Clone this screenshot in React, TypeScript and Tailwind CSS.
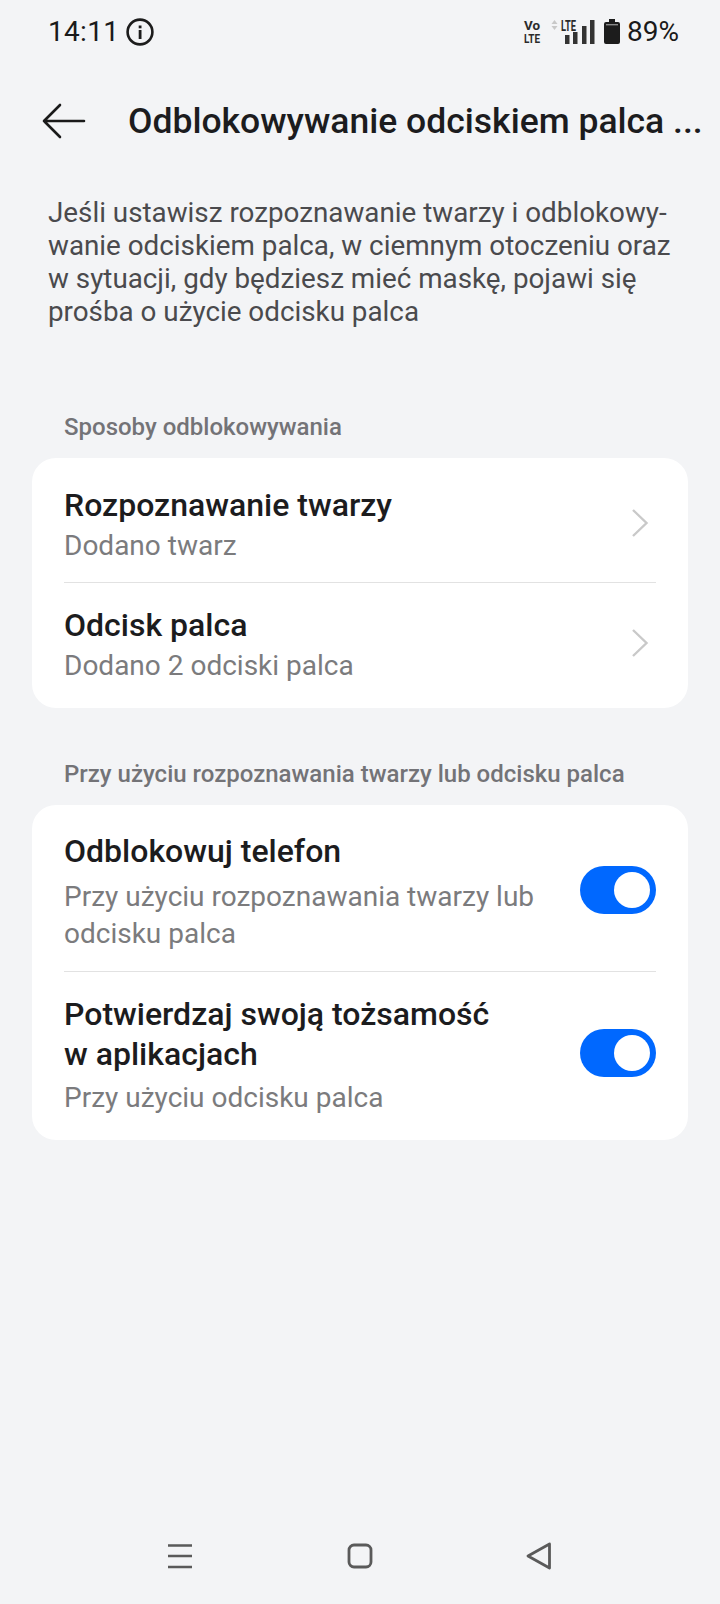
import React from 'react';

const Chevron = () => (
  <svg width="18" height="30" viewBox="0 0 18 30" fill="none" className="shrink-0">
    <path d="M2 2 L15.5 15 L2 28" stroke="#c9c9c9" strokeWidth="2.4" />
  </svg>
);

const Toggle = () => (
  <div className="flex h-[48px] w-[76px] shrink-0 items-center justify-end rounded-full bg-[#0068ff] pr-[6px]">
    <div className="h-[36px] w-[36px] rounded-full bg-white" />
  </div>
);

const StatusBar = () => (
  <div className="flex h-[64px] items-center justify-between pl-[48px] pr-[41px]">
    <div className="flex items-center gap-[7px]">
      <span className="text-[28px] text-[#1a1a1a] tracking-[0.3px]">14:11</span>
      <svg width="28" height="28" viewBox="0 0 28 28" fill="none">
        <circle cx="14" cy="14" r="12.4" stroke="#1c1c1c" strokeWidth="2.6" />
        <rect x="12.7" y="12" width="2.8" height="9" fill="#1c1c1c" />
        <rect x="12.7" y="7.5" width="2.8" height="2.8" fill="#1c1c1c" />
      </svg>
    </div>
    <div className="flex items-center">
      <svg width="17" height="25" viewBox="0 0 17 25" className="mr-[10px] overflow-visible">
        <text x="0" y="10" fontSize="12.5" fontWeight="700" fill="#2a2a2a" textLength="16" lengthAdjust="spacingAndGlyphs">Vo</text>
        <text x="0" y="23" fontSize="12.5" fontWeight="700" fill="#2a2a2a" textLength="16" lengthAdjust="spacingAndGlyphs">LTE</text>
      </svg>
      <svg width="45" height="26" viewBox="0 0 45 26" className="mr-[8px] overflow-visible">
        <path d="M0.5 5 L3.5 1 L6.5 5 Z M0.5 7 L6.5 7 L3.5 11 Z" fill="#c8c8c8" />
        <text x="10" y="12" fontSize="14" fontWeight="700" fill="#2a2a2a" textLength="15" lengthAdjust="spacingAndGlyphs">LTE</text>
        <rect x="14" y="16" width="4.5" height="9" fill="#333" />
        <rect x="22" y="13" width="4.5" height="12" fill="#333" />
        <rect x="31" y="7" width="4.5" height="18" fill="#333" />
        <rect x="39" y="1" width="4.5" height="24" fill="#333" />
      </svg>
      <svg width="16" height="26" viewBox="0 0 16 26" className="mr-[7px]">
        <path d="M5 0 H11 V3 H14 Q16 3 16 5 V23 Q16 25 14 25 H2 Q0 25 0 23 V5 Q0 3 2 3 H5 Z" fill="#1c1c1c" />
        <rect x="2" y="5" width="12" height="1.4" fill="#8a8a8a" />
      </svg>
      <span className="text-[28px] text-[#1a1a1a]">89%</span>
    </div>
  </div>
);

const Title = ({ children }: { children: React.ReactNode }) => (
  <div className="text-[32px] font-medium leading-[40px] text-[#1c1c1e]">{children}</div>
);

const Sub = ({ children }: { children: React.ReactNode }) => (
  <div className="mt-[2px] text-[28px] leading-[38px] text-[#7b7b7d]">{children}</div>
);

export default function App() {
  return (
    <div className="flex h-[1604px] w-[720px] flex-col overflow-hidden bg-[#f3f4f6] font-['Roboto',sans-serif]">
      <StatusBar />

      {/* Title bar */}
      <div className="mt-[33px] flex h-[50px] items-center">
        <svg width="44" height="36" viewBox="0 0 44 36" fill="none" className="ml-[42px] -translate-y-px shrink-0">
          <path d="M18 2 L2 18 L18 34 M2 18 H42" stroke="#1a1a1a" strokeWidth="2.6" strokeLinecap="round" strokeLinejoin="round" />
        </svg>
        <span className="ml-[42px] whitespace-nowrap text-[35.5px] font-medium text-[#1c1c1e]">
          Odblokowywanie odciskiem palca ...
        </span>
      </div>

      {/* Description */}
      <p className="ml-[48px] mt-[49px] w-[660px] text-[27.8px] leading-[33px] text-[#4a4a4d]">
        Jeśli ustawisz rozpoznawanie twarzy i odblokowy-
        <br />
        wanie odciskiem palca, w ciemnym otoczeniu oraz
        <br />
        w sytuacji, gdy będziesz mieć maskę, pojawi się
        <br />
        prośba o użycie odcisku palca
      </p>

      <div className="ml-[64px] mt-[84px] text-[24px] font-medium leading-[30px] text-[#737377]">Sposoby odblokowywania</div>

      <div className="mx-[32px] mt-[16px] flex h-[250px] w-[656px] flex-col rounded-[24px] bg-white px-[32px]">
        <div className="flex h-[125px] items-center justify-between border-b border-[#e2e2e2] pt-[5px] pr-[7px]">
          <div className="pt-[4px]">
            <Title>Rozpoznawanie twarzy</Title>
            <Sub>Dodano twarz</Sub>
          </div>
          <Chevron />
        </div>
        <div className="flex flex-1 items-center justify-between pb-[5px] pr-[7px]">
          <div className="pt-[4px]">
            <Title>Odcisk palca</Title>
            <Sub>Dodano 2 odciski palca</Sub>
          </div>
          <Chevron />
        </div>
      </div>

      <div className="ml-[64px] mt-[51px] text-[24px] font-medium leading-[30px] text-[#737377]">
        Przy użyciu rozpoznawania twarzy lub odcisku palca
      </div>

      <div className="mx-[32px] mt-[16px] flex w-[656px] flex-col rounded-[24px] bg-white px-[32px]">
        <div className="flex h-[167px] items-center justify-between border-b border-[#e2e2e2] pt-[3px]">
          <div className="w-[480px] pt-[4px]">
            <Title>Odblokowuj telefon</Title>
            <div className="mt-[7px] text-[28px] leading-[37px] text-[#7b7b7d]">
              Przy użyciu rozpoznawania twarzy lub odcisku palca
            </div>
          </div>
          <Toggle />
        </div>
        <div className="flex h-[168px] items-center justify-between pb-[6px]">
          <div className="pt-[4px]">
            <Title>
              Potwierdzaj swoją tożsamość
              <br />w aplikacjach
            </Title>
            <div className="mt-[5px] text-[28px] leading-[38px] text-[#7b7b7d]">Przy użyciu odcisku palca</div>
          </div>
          <Toggle />
        </div>
      </div>

      {/* Nav bar */}
      <div className="mt-auto mb-[34px] flex h-[28px] items-center">
        <svg width="28" height="26" viewBox="0 0 28 26" className="ml-[166px]">
          <path d="M2 2.5 H26 M2 13 H26 M2 24 H26" stroke="#5a5a5a" strokeWidth="2.6" />
        </svg>
        <svg width="28" height="28" viewBox="0 0 28 28" fill="none" className="ml-[152px]">
          <rect x="3" y="3" width="22" height="22" rx="5" stroke="#5a5a5a" strokeWidth="2.8" />
        </svg>
        <svg width="28" height="30" viewBox="0 0 28 30" fill="none" className="ml-[151px]">
          <path d="M24.5 3 L3 15 L24.5 27 Z" stroke="#5a5a5a" strokeWidth="2.8" strokeLinejoin="round" />
        </svg>
      </div>
    </div>
  );
}
